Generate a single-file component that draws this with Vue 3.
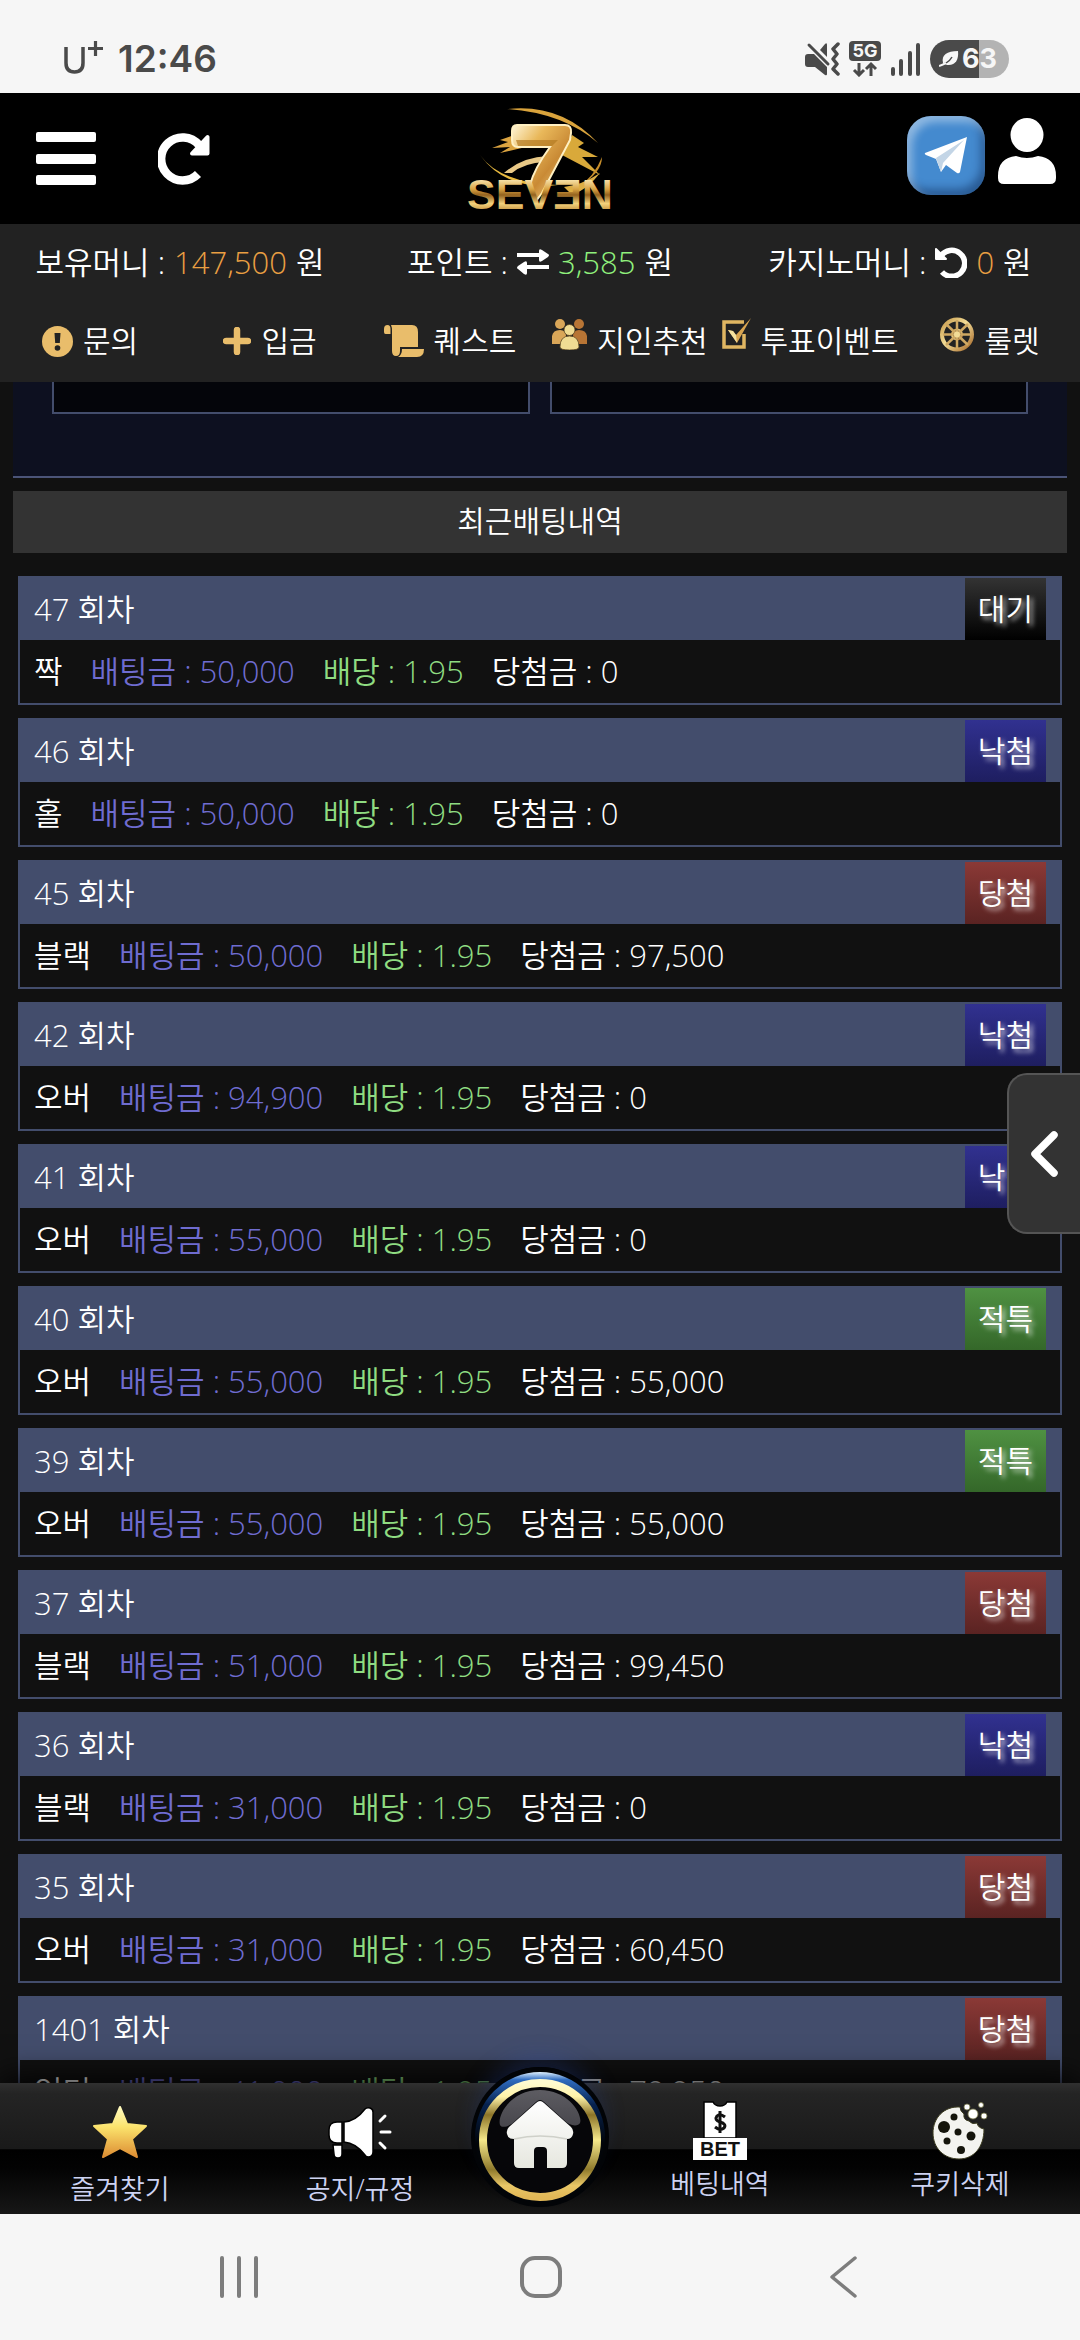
<template>
  <div class="screen">
    <!-- 상태 표시줄 -->
    <div class="status-bar">
      <div class="status-left">
        <svg class="carrier" width="40" height="34" viewBox="0 0 40 34" aria-label="U+">
          <path d="M2 7V23Q2 32 10.500 32T19 23V7" fill="none" stroke="#4a4a4a" stroke-width="3.500" />
          <path d="M24 8.500H39M31.500 1V16" stroke="#4a4a4a" stroke-width="3.200" />
        </svg>
        <span class="clock">12:46</span>
      </div>
      <div class="status-right">
        <svg width="35" height="34" viewBox="0 0 35 34">
          <path d="M0 15Q0 12 3 12H9L22 25V32Q22 34 20 33L10 25H3Q0 25 0 22Z" fill="#4a4a4a" />
          <path d="M15 8L20 2Q22 0 22 3V15Z" fill="#4a4a4a" />
          <path d="M4 3L23 22" stroke="#4a4a4a" stroke-width="3" stroke-linecap="round" />
          <path d="M33 2L28 7L32 12L28 17L32 22L28 27L33 32" fill="none" stroke="#4a4a4a" stroke-width="3.500" stroke-linecap="round" stroke-linejoin="round" />
        </svg>
        <svg width="32" height="36" viewBox="0 0 32 36">
          <rect width="32" height="20" rx="4" fill="#4a4a4a" />
          <text x="16" y="16" text-anchor="middle" class="net-text">5G</text>
          <path d="M10 22V34M5 29L10 34L15 29M22 35V23M17 28L22 23L27 28" fill="none" stroke="#4a4a4a" stroke-width="3" />
        </svg>
        <svg width="31" height="34" viewBox="0 0 31 34">
          <path d="M3 27V32M11 19V32M20 11V32M28 3V32" stroke="#4a4a4a" stroke-width="4" stroke-linecap="round" />
        </svg>
        <div class="battery">
          <svg width="20" height="18" viewBox="0 0 20 18">
            <path d="M4 13C2 5 8 1 19 1C20 10 16 16 8 15Z" fill="#f6f6f6" />
            <path d="M0 15Q9 14 13 7" fill="none" stroke="#4a4a4a" stroke-width="1.500" />
            <path d="M0 16Q3 15 7 13" fill="none" stroke="#f6f6f6" stroke-width="2" />
          </svg>
          <span>63</span>
        </div>
      </div>
    </div>

    <!-- 헤더 -->
    <header class="header">
      <div class="header-side header-left">
        <button class="icon-btn" aria-label="메뉴">
          <svg width="60" height="54" viewBox="0 0 60 54" fill="#fff">
            <rect width="60" height="10" rx="2" />
            <rect y="22" width="60" height="10" rx="2" />
            <rect y="43" width="60" height="10" rx="2" />
          </svg>
        </button>
        <button class="icon-btn" aria-label="새로고침">
          <svg width="52" height="52" viewBox="0 0 52 52">
            <path d="M40 41A21.500 21.500 0 1 1 41 12" fill="none" stroke="#fff" stroke-width="8.500" />
            <path d="M49.500 4V20.500H34Z" fill="#fff" stroke="#fff" stroke-width="4" stroke-linejoin="round" />
          </svg>
        </button>
      </div>

      <a class="logo" href="#" aria-label="SEVEN">
        <svg width="156" height="124" viewBox="-4 -8 156 124">
          <defs>
            <linearGradient id="gold" x1="0" y1="0" x2="0" y2="1">
              <stop offset="0.150" stop-color="#fff2c4" />
              <stop offset="0.400" stop-color="#d9a444" />
              <stop offset="0.520" stop-color="#94621f" />
              <stop offset="0.700" stop-color="#f3d27c" />
              <stop offset="0.900" stop-color="#b88030" />
            </linearGradient>
            <linearGradient id="goldSeven" x1="0" y1="0" x2="1" y2="1">
              <stop offset="0" stop-color="#fff6d8" />
              <stop offset="0.300" stop-color="#e9b85a" />
              <stop offset="0.600" stop-color="#c98a35" />
              <stop offset="1" stop-color="#ffe9a3" />
            </linearGradient>
          </defs>
          <path d="M41 4Q95 -2 132 38Q97 8 41 4Z" fill="#d9a33c" />
          <path d="M14 50Q34 78 92 80Q40 86 14 50Z" fill="#e8b93f" />
          <path d="M106 30L118 38L112 42L132 52L116 52L134 70L96 50Z" fill="#d9a93a" />
          <path d="M48 30L34 35L42 37L26 43L44 42L34 48L60 42V32Z" fill="#dba441" />
          <path d="M38 68Q56 52 82 51L79 57Q58 58 46 68Z" fill="#e9c987" />
          <path d="M136 52Q136 68 112 82Q128 72 136 52Z" fill="#c78e2b" />
          <path d="M98 82Q116 80 134 68Q122 84 106 90Z" fill="#dcae45" />
          <path d="M51 20H99Q106 20 105 28L104 35L76 88L70 96L64 80Q68 64 84 42H52Q46 42 46 35V26Q46 20 51 20Z" fill="url(#goldSeven)" stroke="#fff0c2" stroke-width="2" />
          <path d="M50 35H92L86 41H52Z" fill="#b47a22" opacity="0.700" />
          <text x="74" y="104" text-anchor="middle" class="logo-text" fill="url(#gold)">SEVƎN</text>
        </svg>
      </a>

      <div class="header-side header-right">
        <button class="telegram" aria-label="텔레그램">
          <svg width="44" height="38" viewBox="0 0 44 38">
            <path d="M1 17L43 1L36 36Q35 38 33 37L22 29L17 36L12 23L2 19Q0 18 1 17Z" fill="#fff" />
            <path d="M12 22L40 4L19 27L17 36Z" fill="#c3d5e6" />
          </svg>
        </button>
        <button class="icon-btn" aria-label="내 정보">
          <svg width="58" height="74" viewBox="0 0 58 74" fill="#fff">
            <ellipse cx="29" cy="17" rx="16.500" ry="17" />
            <path d="M18 38Q29 42 40 38Q58 40 58 58V60Q58 66 52 66H6Q0 66 0 60V58Q0 40 18 38Z" />
          </svg>
        </button>
      </div>
    </header>

    <!-- 보유금액 -->
    <section class="wallet">
      <div class="wallet-item">보유머니 : <span class="orange">147,500</span> 원</div>
      <div class="wallet-item">
        포인트 :
        <svg width="32" height="26" viewBox="0 0 32 26" fill="#fff">
          <path d="M0 4H22V2Q22 -1 25 1L31 5Q33 6 31 8L25 12Q22 14 22 11V8H0Z" />
          <path d="M32 16H10V14Q10 11 7 13L1 17Q-1 19 1 20L7 25Q10 27 10 24V20H32Z" />
        </svg>
        <span class="green">3,585</span> 원
      </div>
      <div class="wallet-item">
        카지노머니 :
        <svg width="32" height="31" viewBox="0 0 32 31">
          <path d="M6 9A13 13 0 1 1 7 25" fill="none" stroke="#fff" stroke-width="5.500" />
          <path d="M1 2V12H11Z" fill="#fff" stroke="#fff" stroke-width="2" stroke-linejoin="round" />
        </svg>
        <span class="orange">0</span> 원
      </div>
    </section>

    <!-- 바로가기 메뉴 -->
    <nav class="quick-menu">
      <a href="#">
        <svg width="31" height="31" viewBox="0 0 31 31">
          <circle cx="15.500" cy="15.500" r="15.500" fill="#e9bd6b" />
          <path d="M12.500 7H18.500L17.800 17H13.200Z" fill="#222" />
          <circle cx="15.500" cy="22" r="2.800" fill="#222" />
        </svg>
        문의
      </a>
      <a href="#">
        <svg width="28" height="28" viewBox="0 0 28 28">
          <path d="M14 3V25M3 14H25" stroke="#e9bd6b" stroke-width="6.500" stroke-linecap="round" />
        </svg>
        입금
      </a>
      <a href="#">
        <svg width="40" height="32" viewBox="0 0 40 32" fill="#e9bd6b">
          <path d="M0 4Q0 0 3.500 0Q6.500 0 6.500 4V9H1.500Q0 9 0 7Z" />
          <path d="M7 0H28Q34 0 34 7V22H16V26Q16 31 12 31Q8 31 8 26V6Q8 2 7 0Z" />
          <path d="M18 24H40Q40 32 33 32H14Q18 30 18 24Z" />
        </svg>
        퀘스트
      </a>
      <a href="#">
        <svg class="raised" width="35" height="31" viewBox="0 0 35 31">
          <defs>
            <linearGradient id="brass" x1="0" y1="0" x2="1" y2="1">
              <stop offset="0" stop-color="#c79a4b" />
              <stop offset="0.450" stop-color="#f2dc96" />
              <stop offset="1" stop-color="#a86b2c" />
            </linearGradient>
          </defs>
          <g fill="#d9a658">
            <circle cx="8" cy="5" r="5" />
            <path d="M0 25V17Q1 11 8 11Q14 11 14 17V25Z" />
          </g>
          <g fill="#b87535">
            <circle cx="27" cy="5" r="5" />
            <path d="M21 25V17Q21 11 27 11Q34 11 35 17V25Z" />
          </g>
          <g fill="#f0dc93" stroke="#5a4420" stroke-width="0.800">
            <circle cx="17.500" cy="11" r="5.500" />
            <path d="M8 28Q8 17 17.500 17Q27 17 27 28Q27 31 17.500 31Q8 31 8 28Z" />
          </g>
        </svg>
        지인추천
      </a>
      <a href="#">
        <svg class="raised" width="29" height="32" viewBox="0 0 29 32">
          <path d="M22 4H2V29H22V16" fill="none" stroke="#e0b662" stroke-width="3.500" />
          <path d="M6 12L11 13L14 17L29 0L15 25Z" fill="#d9a550" />
          <path d="M6 12L11 13L14 17L15 25Z" fill="#f6e3a0" />
        </svg>
        투표이벤트
      </a>
      <a href="#">
        <svg class="raised" width="34" height="35" viewBox="0 0 34 35">
          <g fill="none" stroke="url(#brass)">
            <circle cx="17" cy="17.500" r="15" stroke-width="4" />
            <circle cx="17" cy="17.500" r="5" stroke-width="2" />
          </g>
          <path d="M17 3V32M6 7L28 28M28 7L6 28M3 17.500H31" stroke="#cfa862" stroke-width="2.500" />
          <circle cx="17" cy="17.500" r="3" fill="#f2dc96" />
        </svg>
        룰렛
      </a>
    </nav>

    <main class="content">
      <div class="game-panel">
        <div class="game-box"></div>
        <div class="game-box"></div>
      </div>

      <h2 class="section-title">최근배팅내역</h2>

      <!-- 배팅 목록 -->
      <div class="bet-list">
        <article v-for="bet in bets" :key="bet.round" class="bet-card">
          <div class="bet-head">
            <span>{{ bet.round }} 회차</span>
            <span class="badge" :class="badgeClass[bet.result]">{{ bet.result }}</span>
          </div>
          <div class="bet-body">
            <span>{{ bet.pick }}</span>
            <span class="bet-amount">배팅금 : {{ bet.amount }}</span>
            <span class="bet-odds">배당 : 1.95</span>
            <span>당첨금 : {{ bet.prize }}</span>
          </div>
        </article>
      </div>

      <button class="side-tab" aria-label="열기">
        <svg width="28" height="46" viewBox="0 0 28 46">
          <path d="M24 4L5 23L24 42" fill="none" stroke="#fff" stroke-width="7.500" stroke-linecap="round" stroke-linejoin="round" />
        </svg>
      </button>
    </main>

    <!-- 하단 메뉴 -->
    <nav class="bottom-menu">
      <a href="#" class="tab">
        <svg width="56" height="54" viewBox="0 0 56 54">
          <defs>
            <linearGradient id="star" x1="0" y1="0" x2="0" y2="1">
              <stop offset="0" stop-color="#fffbc0" />
              <stop offset="0.400" stop-color="#fbe36c" />
              <stop offset="1" stop-color="#dd8d33" />
            </linearGradient>
          </defs>
          <path d="M28 2L35 19L54 21L40 34L45 52L28 43L11 52L16 34L2 21L21 19Z" fill="url(#star)" stroke="url(#star)" stroke-width="2" stroke-linejoin="round" />
        </svg>
        즐겨찾기
      </a>
      <a href="#" class="tab">
        <svg width="64" height="54" viewBox="0 0 64 54">
          <g fill="#fff" stroke="#000" stroke-width="1.500">
            <path d="M14 17H9Q1 17 1 25V30Q1 38 9 38H14Z" />
            <path d="M5 40H14V49Q14 53 10 53Q6 53 6 49Z" />
            <path d="M16 17Q28 16 37 4Q39 2 42 3Q45 4 45 7V47Q45 51 41 52Q38 52 37 50Q28 38 16 37Z" />
          </g>
          <path d="M52 16L57 11M53 27H62M52 38L57 43" stroke="#fff" stroke-width="3" stroke-linecap="round" />
        </svg>
        공지/규정
      </a>
      <div class="home-slot">
        <button class="home-btn" aria-label="홈">
          <svg width="138" height="140" viewBox="0 0 138 140">
            <defs>
              <linearGradient id="ring" x1="0" y1="0" x2="0" y2="1">
                <stop offset="0" stop-color="#fffbd0" />
                <stop offset="0.120" stop-color="#fff3a8" />
                <stop offset="0.280" stop-color="#8c7428" />
                <stop offset="0.500" stop-color="#f5e88a" />
                <stop offset="0.760" stop-color="#8f7a2c" />
                <stop offset="0.900" stop-color="#e9c767" />
                <stop offset="1" stop-color="#e2b857" />
              </linearGradient>
              <linearGradient id="blueRim" x1="0" y1="0" x2="0" y2="1">
                <stop offset="0" stop-color="#dff1ff" />
                <stop offset="0.060" stop-color="#2f6cc0" />
                <stop offset="0.250" stop-color="#06224f" />
                <stop offset="0.550" stop-color="#020509" />
              </linearGradient>
              <linearGradient id="gloss" x1="0" y1="0" x2="0" y2="1">
                <stop offset="0" stop-color="#5d5c62" />
                <stop offset="1" stop-color="#47464c" />
              </linearGradient>
              <linearGradient id="house" x1="0" y1="0" x2="0" y2="1">
                <stop offset="0" stop-color="#fff" />
                <stop offset="1" stop-color="#e6e7df" />
              </linearGradient>
            </defs>
            <ellipse cx="69" cy="70" rx="69" ry="70" fill="#020407" />
            <circle cx="69" cy="70" r="65" fill="url(#blueRim)" />
            <circle cx="69" cy="73" r="57" fill="#060609" stroke="url(#ring)" stroke-width="8" />
            <path d="M29 58C26 48 40 23 69 23C98 23 112 48 109 56C107 60 98 59 93 53L73 35Q69 31 65 35L45 53C40 59 31 62 29 58Z" fill="url(#gloss)" />
            <path d="M69 34Q71 34 73 36L100 60Q103 63 102 67Q101 72 96 72V96Q96 101 91 101H76V84Q76 80 72 80H67Q63 80 63 84V101H48Q43 101 43 96V72Q37 72 36 67Q35 63 38 60L65 36Q67 34 69 34Z" fill="url(#house)" />
            <path d="M43 72Q69 66 96 72" fill="none" stroke="#cfd0c9" stroke-width="1.500" />
          </svg>
        </button>
      </div>
      <a href="#" class="tab tab-tall">
        <svg width="58" height="60" viewBox="0 0 58 60">
          <path d="M13 2H22Q24 6 29 6T36 2H45V38H13Z" fill="#fff" stroke="#000" stroke-width="1.500" />
          <path d="M29 11V33" stroke="#111" stroke-width="3" />
          <path d="M34 17Q29 13 26 16Q23 20 29 22Q36 24 33 28Q29 31 24 27" fill="none" stroke="#111" stroke-width="3" />
          <rect x="2" y="38" width="54" height="22" fill="#fff" />
          <text x="29" y="56" text-anchor="middle" class="bet-text">BET</text>
        </svg>
        베팅내역
      </a>
      <a href="#" class="tab tab-tall">
        <svg width="56" height="58" viewBox="0 0 56 58">
          <path d="M28 5C12 4 1 16 1 31S12 57 27 57S52 45 52 27Q46 26 45 21Q40 23 37 19Q31 18 32 12Q28 9 28 5Z" fill="#f3f3ef" stroke="#3c3c20" />
          <g fill="#15150c">
            <circle cx="12" cy="25" r="6" />
            <circle cx="22" cy="15" r="3.500" />
            <circle cx="26" cy="30" r="3.500" />
            <circle cx="39" cy="34" r="4.500" />
            <circle cx="15" cy="39" r="3.500" />
            <circle cx="29" cy="48" r="4" />
          </g>
          <g fill="#fff" stroke="#77774a" stroke-width="0.800">
            <circle cx="41" cy="12" r="5" />
            <circle cx="35" cy="5" r="3" />
            <circle cx="49" cy="3" r="2.500" />
            <circle cx="52" cy="14" r="3" />
          </g>
        </svg>
        쿠키삭제
      </a>
    </nav>

    <!-- 시스템 내비게이션 -->
    <div class="system-nav">
      <button class="icon-btn" aria-label="최근 앱">
        <svg width="40" height="42" viewBox="0 0 40 42">
          <path d="M3 2V40M20 2V40M37 2V40" stroke="#7d7d7d" stroke-width="4" stroke-linecap="round" />
        </svg>
      </button>
      <button class="icon-btn" aria-label="홈 화면">
        <svg width="42" height="42" viewBox="0 0 42 42">
          <rect x="2" y="2" width="38" height="38" rx="13" fill="none" stroke="#7d7d7d" stroke-width="4" />
        </svg>
      </button>
      <button class="icon-btn" aria-label="뒤로">
        <svg width="28" height="42" viewBox="0 0 28 42">
          <path d="M26 2L3 21L26 40" fill="none" stroke="#7d7d7d" stroke-width="3.500" stroke-linecap="round" stroke-linejoin="round" />
        </svg>
      </button>
    </div>
  </div>
</template>

<script setup>
const badgeClass = {
  '대기': 'wait',
  '낙첨': 'lose',
  '당첨': 'win',
  '적특': 'void'
}

const bets = [
  { round: 47, pick: '짝', amount: '50,000', prize: '0', result: '대기' },
  { round: 46, pick: '홀', amount: '50,000', prize: '0', result: '낙첨' },
  { round: 45, pick: '블랙', amount: '50,000', prize: '97,500', result: '당첨' },
  { round: 42, pick: '오버', amount: '94,900', prize: '0', result: '낙첨' },
  { round: 41, pick: '오버', amount: '55,000', prize: '0', result: '낙첨' },
  { round: 40, pick: '오버', amount: '55,000', prize: '55,000', result: '적특' },
  { round: 39, pick: '오버', amount: '55,000', prize: '55,000', result: '적특' },
  { round: 37, pick: '블랙', amount: '51,000', prize: '99,450', result: '당첨' },
  { round: 36, pick: '블랙', amount: '31,000', prize: '0', result: '낙첨' },
  { round: 35, pick: '오버', amount: '31,000', prize: '60,450', result: '당첨' },
  { round: 1401, pick: '언더', amount: '41,000', prize: '79,950', result: '당첨' }
]
</script>

<style>
body {
  margin: 0;
  background: #111;
}
</style>

<style scoped>
.screen {
  display: flex;
  flex-direction: column;
  height: 100vh;
  overflow: hidden;
  background: #111;
  color: #fff;
  font-family: "Open Sans", "Noto Sans CJK KR", sans-serif;
  font-size: 30px;
  font-weight: 350;
  line-height: 40px;
}

svg {
  display: block;
  flex: none;
}

a {
  color: inherit;
  text-decoration: none;
}

button {
  border: none;
  padding: 0;
  background: none;
  cursor: pointer;
}

/* 상태 표시줄 */
.status-bar {
  flex: none;
  display: flex;
  justify-content: space-between;
  align-items: center;
  height: 69px;
  padding: 24px 71px 0 64px;
  background: #f6f6f6;
}

.status-left,
.status-right {
  display: flex;
  align-items: center;
  gap: 14px;
}

.status-right {
  gap: 9px;
}

.carrier {
  margin-bottom: 4px;
}

.clock {
  color: #4a4a4a;
  font-family: Inter, sans-serif;
  font-size: 37px;
  font-weight: 600;
}

.net-text {
  fill: #f6f6f6;
  font-family: Inter, sans-serif;
  font-size: 18px;
  font-weight: 700;
}

.battery {
  display: flex;
  align-items: center;
  gap: 3px;
  height: 38px;
  padding: 0 12px 0 9px;
  border-radius: 19px;
  background: linear-gradient(90deg, #4a4a4a 62%, #b3b3b3 62%);
  color: #f6f6f6;
  font-family: Inter, sans-serif;
  font-size: 27px;
  font-weight: 700;
}

/* 헤더 */
.header {
  flex: none;
  display: grid;
  grid-template-columns: 1fr auto 1fr;
  align-items: center;
  height: 131px;
  padding: 0 24px;
  background: #000;
}

.header-side {
  display: flex;
  align-items: center;
}

.header-left {
  gap: 62px;
  padding-left: 12px;
}

.header-right {
  justify-content: flex-end;
  gap: 13px;
  padding-bottom: 7px;
}

.logo-text {
  font-family: "Liberation Sans", sans-serif;
  font-size: 43px;
  font-weight: 700;
}

.telegram {
  display: flex;
  align-items: center;
  justify-content: center;
  width: 78px;
  height: 79px;
  border-radius: 24px;
  background: #448acf;
  box-shadow: inset 5px 6px 8px rgba(255, 255, 255, 0.4), inset -4px -6px 8px rgba(0, 20, 60, 0.4);
}

/* 보유금액 */
.wallet {
  flex: none;
  display: grid;
  grid-template-columns: repeat(3, 1fr);
  height: 76px;
  background: #222;
  font-size: 31px;
}

.wallet-item {
  display: flex;
  align-items: center;
  justify-content: center;
  gap: 9px;
  white-space: nowrap;
}

.orange {
  color: #e99f42;
}

.green {
  color: #90f07c;
}

.quick-menu {
  flex: none;
  display: grid;
  grid-template-columns: repeat(6, 1fr);
  height: 82px;
  background: #222;
}

.quick-menu a {
  display: flex;
  align-items: center;
  justify-content: center;
  gap: 10px;
  white-space: nowrap;
}

.raised {
  margin-bottom: 14px;
}

/* 본문 */
.content {
  position: relative;
  flex: 1;
  min-height: 0;
  padding: 0 13px;
}

.game-panel {
  display: grid;
  grid-template-columns: 1fr 1fr;
  gap: 20px;
  padding: 0 39px 62px;
  border-bottom: 2px solid #4b5478;
  background: #0d1020;
}

.game-box {
  height: 30px;
  border: 2px solid #434d6c;
  border-top: none;
  background: #04050a;
}

.section-title {
  margin: 13px 0 23px;
  padding: 10px 0 12px;
  background: #333;
  font-size: 30px;
  font-weight: 350;
  text-align: center;
}

.bet-list {
  display: flex;
  flex-direction: column;
  gap: 13px;
  padding: 0 5px;
  font-size: 31px;
}

.bet-card {
  border: 2px solid #434d6c;
}

.bet-head {
  display: flex;
  justify-content: space-between;
  padding: 0 14px;
  background: #434d6c;
  line-height: 62px;
}

.bet-body {
  display: flex;
  gap: 28px;
  padding: 0 14px;
  line-height: 63px;
}

.bet-amount {
  color: #6f6cd0;
}

.bet-odds {
  color: #8fdc81;
}

.badge {
  padding: 0 13px;
  font-size: 30px;
  text-shadow: 3px 3px 5px rgba(255, 255, 255, 0.8);
}

.badge.wait {
  background: linear-gradient(#333, #000);
}

.badge.lose {
  background: linear-gradient(#313190, #1e1e60);
}

.badge.win {
  background: linear-gradient(#8b3936, #5a2322);
}

.badge.void {
  background: linear-gradient(#4f9142, #346729);
}

/* 오른쪽 펼침 버튼 */
.side-tab {
  position: absolute;
  top: 691px;
  right: 0;
  display: flex;
  align-items: center;
  width: 73px;
  height: 161px;
  padding-left: 21px;
  border: 2px solid #555;
  border-right: none;
  border-radius: 20px 0 0 20px;
  background: #333;
}

/* 하단 메뉴 */
.bottom-menu {
  position: relative;
  flex: none;
  display: grid;
  grid-template-columns: 1fr 1fr 120px 1fr 1fr;
  height: 131px;
  background: linear-gradient(#303030 0%, #242424 8%, #1a1a1a 50%, #000 51%, #030303 65%, #171717 100%);
  box-shadow: 0 -4px 30px #000;
  color: #cdd3f2;
  font-size: 27px;
}

.tab {
  display: flex;
  flex-direction: column;
  align-items: center;
  justify-content: flex-end;
  gap: 10px;
  padding-bottom: 5px;
}

.tab-tall {
  gap: 4px;
  padding-bottom: 10px;
}

.home-slot {
  display: flex;
  justify-content: center;
}

.home-btn {
  flex: none;
  align-self: flex-start;
  margin-top: -16px;
  border-radius: 50%;
  box-shadow: 0 -16px 24px -8px rgba(40, 80, 200, 0.25);
}

.bet-text {
  fill: #111;
  font-family: "Liberation Sans", sans-serif;
  font-size: 20px;
  font-weight: 700;
}

/* 시스템 내비게이션 */
.system-nav {
  position: relative;
  flex: none;
  display: grid;
  grid-template-columns: repeat(3, 1fr);
  place-items: center;
  height: 126px;
  padding: 0 86px 0 88px;
  background: #f6f6f6;
}
</style>
